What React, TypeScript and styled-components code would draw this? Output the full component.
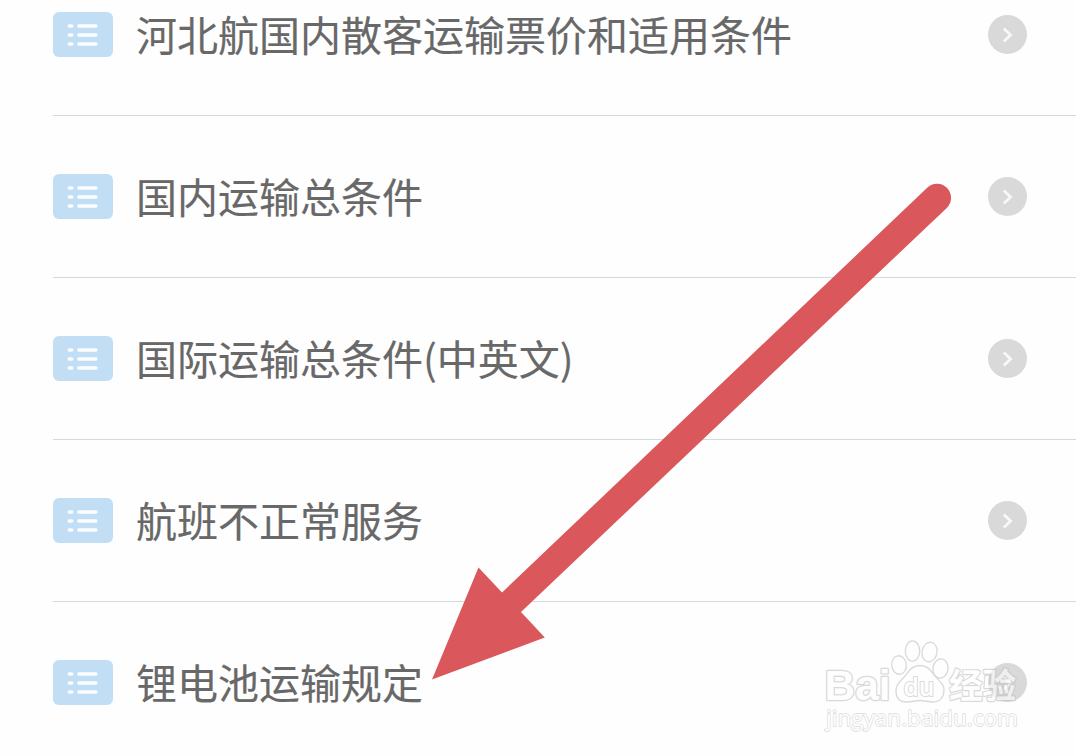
import styled, { createGlobalStyle } from 'styled-components';

const GlobalStyle = createGlobalStyle`
  * {
    box-sizing: border-box;
  }

  body {
    margin: 0;
    background: #fefefe;
    font-family: 'Noto Sans CJK SC', sans-serif;
  }
`;

const Page = styled.main`
  position: relative;
  height: 756px;
  overflow: hidden;
`;

// The list is scrolled a little, so the first row is cut at the top
const List = styled.ul`
  list-style: none;
  margin: -46px 0 0;
  padding: 0 0 0 53px;
`;

const Row = styled.li`
  display: flex;
  align-items: center;
  height: 162px;
  padding-right: 49px;
  border-bottom: 1px solid #d3dadb;
`;

const ListBadge = styled.span`
  display: flex;
  align-items: center;
  justify-content: center;
  flex: none;
  width: 60px;
  height: 45px;
  margin-right: 23px;
  border-radius: 6px;
  background: #c2def5;
`;

const Label = styled.span`
  flex: 1;
  padding-bottom: 4px;
  color: #686868;
  font-size: 41px;
  line-height: 60px;
  white-space: nowrap;
  -webkit-text-stroke: 0.15px #686868;
`;

const Chevron = styled.span`
  display: flex;
  align-items: center;
  justify-content: center;
  flex: none;
  width: 39px;
  height: 39px;
  border-radius: 50%;
  background: #d9d9d9;
`;

const Overlay = styled.svg`
  position: absolute;
  top: 0;
  left: 0;
  pointer-events: none;
`;

const WatermarkGroup = styled.g`
  fill: #fff;
  stroke: #c2c2c2;
  stroke-linejoin: round;
  opacity: 0.6;
`;

const WatermarkText = styled.text<{ $size: number; $weight?: number; $family?: string; $outline?: number }>`
  font-family: ${({ $family }) => $family ?? 'Open Sans'}, sans-serif;
  font-size: ${({ $size }) => $size}px;
  font-weight: ${({ $weight }) => $weight ?? 400};
  stroke-width: ${({ $outline }) => $outline ?? 2}px;
  paint-order: stroke;
`;

const Paw = styled.g`
  stroke-width: 1.3px;
`;

const items = [
  '河北航国内散客运输票价和适用条件',
  '国内运输总条件',
  '国际运输总条件(中英文)',
  '航班不正常服务',
  '锂电池运输规定',
];

const ListIcon = () => (
  <svg width="32" height="24" viewBox="0 0 32 24" stroke="#fbfdff" strokeWidth="3.4" strokeLinecap="round">
    <path d="M2.2 3h2.6M11.8 3h17.2M2.2 12h2.6M11.8 12h17.2M2.2 21h2.6M11.8 21h17.2" />
  </svg>
);

const ChevronIcon = () => (
  <svg width="12" height="16" viewBox="0 0 12 16" fill="none" stroke="#f8f8f8" strokeWidth="2.8">
    <path d="M1.8 1.6L8.6 8L1.8 14.4" />
  </svg>
);

const Arrow = () => (
  <path
    d="M432 679.5L478.5 567.5L502 592.5L927.2 187.7A14 14 0 0 1 946.8 207.9L521 612L544.8 637.5Z"
    fill="#da575c"
  />
);

const Watermark = () => (
  <WatermarkGroup>
    <WatermarkText x="824.5" y="699.5" $size={43} $weight={700} $family="Liberation Sans" $outline={2.6} textLength="66" lengthAdjust="spacingAndGlyphs">
      Bai
    </WatermarkText>
    <Paw>
      <ellipse cx="899" cy="665" rx="7.3" ry="9.3" transform="rotate(-8 899 665)" />
      <ellipse cx="912.5" cy="651" rx="7.2" ry="10.2" />
      <ellipse cx="929.5" cy="652" rx="7.5" ry="9.8" transform="rotate(12 929.5 652)" />
      <ellipse cx="940.5" cy="668.5" rx="7.5" ry="9.7" transform="rotate(8 940.5 668.5)" />
      <path d="M920 665.5C912 665.5 909 671 905 676C900 682 896 684 896 691C896 698 900 702 907 702C912 702 915 700.5 920 700.5C925 700.5 928 702 933 702C940 702 944 697 944 690C944 684 940 682 935 676C931 671 928 665.5 920 665.5Z" />
    </Paw>
    <WatermarkText x="903.5" y="695.5" $size={25} $weight={600} textLength="31" lengthAdjust="spacingAndGlyphs">
      du
    </WatermarkText>
    <WatermarkText x="949" y="698" $size={34} $weight={700} $family="Noto Sans CJK SC" $outline={2.4} textLength="67" lengthAdjust="spacingAndGlyphs">
      经验
    </WatermarkText>
    <WatermarkText x="826" y="726" $size={22} $outline={1.3} textLength="192" lengthAdjust="spacingAndGlyphs">
      jingyan.baidu.com
    </WatermarkText>
  </WatermarkGroup>
);

const App = () => (
  <>
    <GlobalStyle />
    <Page>
      <List>
        {items.map((item) => (
          <Row key={item}>
            <ListBadge>
              <ListIcon />
            </ListBadge>
            <Label>{item}</Label>
            <Chevron>
              <ChevronIcon />
            </Chevron>
          </Row>
        ))}
      </List>
      <Overlay width="1076" height="756" viewBox="0 0 1076 756">
        <Arrow />
        <Watermark />
      </Overlay>
    </Page>
  </>
);

export default App;
